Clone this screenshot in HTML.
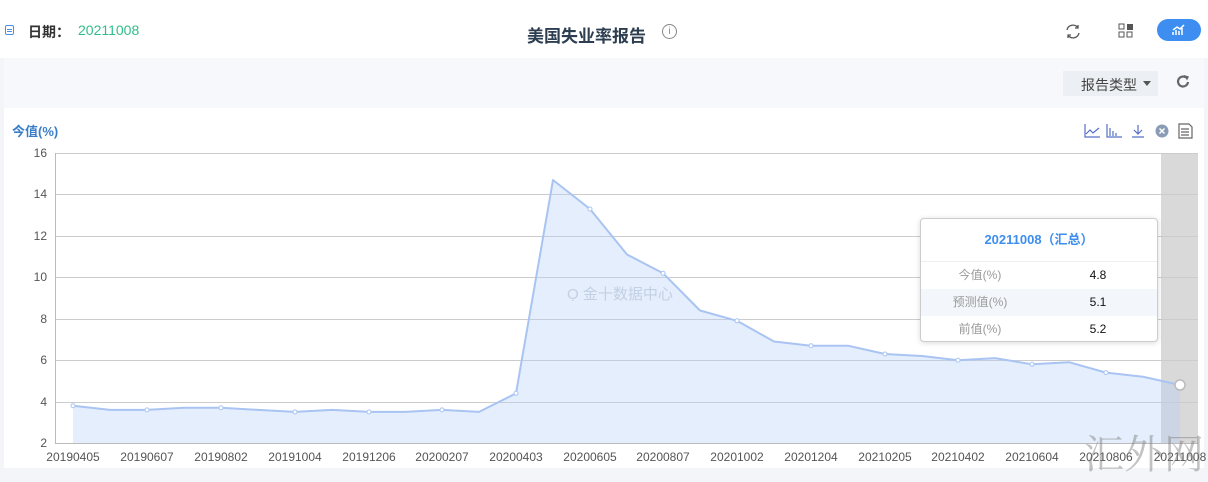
<!DOCTYPE html>
<html><head><meta charset="utf-8"><style>
body{margin:0;width:1208px;height:482px;overflow:hidden;background:#fff;font-family:"Liberation Sans","Noto Sans CJK SC",sans-serif;position:relative}
.a{position:absolute}
</style></head><body>
<!-- top bar -->
<div class="a" style="left:5px;top:25px;width:9px;height:10px;border:1.5px solid #4a90e2;border-radius:2px;box-sizing:border-box"></div>
<div class="a" style="left:7px;top:29px;width:5px;height:1px;background:#4a90e2"></div>
<div class="a" style="left:7px;top:31px;width:5px;height:1px;background:#4a90e2"></div>
<div class="a" style="left:28px;top:22px;font-size:14px;font-weight:bold;color:#333">日期：</div>
<div class="a" style="left:78px;top:22px;font-size:14px;color:#2fbf8a">20211008</div>
<div class="a" style="left:527px;top:22px;font-size:17px;font-weight:bold;color:#2c3e50">美国失业率报告</div>
<div class="a" style="left:662px;top:24px;width:15px;height:15px;border:1px solid #888;border-radius:50%;box-sizing:border-box;font-size:10px;color:#888;text-align:center;line-height:13px">i</div>
<svg class="a" style="left:1064px;top:23px" width="18" height="17" viewBox="0 0 18 17" fill="none" stroke="#555" stroke-width="1.3"><path d="M3 7a6 6 0 0 1 11-2M15 10a6 6 0 0 1-11 2"/><path d="M14 2v3h-3M4 15v-3h3"/></svg>
<svg class="a" style="left:1118px;top:23px" width="16" height="16"><rect x="1" y="1" width="5" height="5" fill="none" stroke="#555"/><rect x="9" y="1" width="6" height="6" fill="#555"/><rect x="1" y="9" width="5" height="5" fill="none" stroke="#555"/><rect x="9" y="9" width="5" height="5" fill="none" stroke="#555"/></svg>
<div class="a" style="left:1157px;top:19px;width:44px;height:22px;background:#3d8ef0;border-radius:11px"></div>
<svg class="a" style="left:1172px;top:24px" width="14" height="12"><path d="M1 11V8M4 11V6M7 11V7M10 11V4M1 6l4-3 3 2 4-4" stroke="#fff" stroke-width="1.5" fill="none"/></svg>
<!-- gray band -->
<div class="a" style="left:0;top:58px;width:1208px;height:424px;background:#f3f5f9"></div>
<div class="a" style="left:4px;top:58px;width:1200px;height:50px;background:#f7f8fb"></div>
<div class="a" style="left:1063px;top:71px;width:95px;height:25px;background:#eceff3"></div>
<div class="a" style="left:1081px;top:75px;font-size:14px;color:#444">报告类型</div>
<div class="a" style="left:1143px;top:81px;width:0;height:0;border-left:4px solid transparent;border-right:4px solid transparent;border-top:5px solid #555"></div>
<svg class="a" style="left:1176px;top:74px" width="15" height="15"><path d="M12 8a5 5 0 1 1-2-4.5" stroke="#666" stroke-width="2.2" fill="none"/><path d="M8 1l5 1.5-2 4z" fill="#666"/></svg>
<!-- chart area -->
<div class="a" style="left:4px;top:108px;width:1200px;height:360px;background:#fff"></div>
<div class="a" style="left:12px;top:121px;font-size:13px;font-weight:bold;color:#3a7ec8">今值(%)</div>
<svg class="a" style="left:1084px;top:123px" width="112" height="16" fill="none" stroke="#5470c6" stroke-width="1.2">
<path d="M1 1v13h15M2 11l4-4 3 3 6-5"/>
<path d="M23 1v13h15M26 13V5M29 13V8M32 13V10"/>
<path d="M54 2v9M50 7l4 4 4-4M48 14h12"/>
<circle cx="78" cy="8" r="6.5" fill="#8a9bb5" stroke="none"/><path d="M75.5 5.5l5 5M80.5 5.5l-5 5" stroke="#fff" stroke-width="1.5"/>
<path d="M95 1h10l3 3v11H95zM97 6h8M97 9h8M97 12h8" stroke="#666"/>
</svg>
<svg class="a" style="left:0;top:0" width="1208" height="482">
<rect x="1161" y="153" width="37" height="290" fill="#d9d9d9"/>
<g stroke="#ccc" stroke-width="1">
<line x1="55" x2="1198" y1="153.5" y2="153.5"/><line x1="55" x2="1198" y1="194.5" y2="194.5"/><line x1="55" x2="1198" y1="236.5" y2="236.5"/><line x1="55" x2="1198" y1="277.5" y2="277.5"/><line x1="55" x2="1198" y1="319.5" y2="319.5"/><line x1="55" x2="1198" y1="360.5" y2="360.5"/><line x1="55" x2="1198" y1="402.5" y2="402.5"/>
</g>
<line x1="55" x2="1198" y1="443.5" y2="443.5" stroke="#bbb"/>
<line x1="55.5" x2="55.5" y1="153" y2="443" stroke="#bbb"/>
<polygon fill="rgba(180,205,245,0.35)" points="73,443 73,405.7 110,409.9 147,409.9 184,407.8 221,407.8 258,409.9 295,411.9 332,409.9 369,411.9 405,411.9 442,409.9 479,411.9 516,393.3 553,180 590,209 627,254.5 663,273.2 700,310.5 737,320.8 774,341.5 811,345.7 848,345.7 885,354 922,356 958,360.2 995,358.1 1032,364.3 1069,362.2 1106,372.6 1143,376.7 1180,385 1180,443"/>
<polyline fill="none" stroke="#a9c4f2" stroke-width="2" stroke-linejoin="round" points="73,405.7 110,409.9 147,409.9 184,407.8 221,407.8 258,409.9 295,411.9 332,409.9 369,411.9 405,411.9 442,409.9 479,411.9 516,393.3 553,180 590,209 627,254.5 663,273.2 700,310.5 737,320.8 774,341.5 811,345.7 848,345.7 885,354 922,356 958,360.2 995,358.1 1032,364.3 1069,362.2 1106,372.6 1143,376.7 1180,385"/>
<g fill="#fff" stroke="#a9c4f2"><circle cx="73" cy="405.7" r="2"/><circle cx="147" cy="409.9" r="2"/><circle cx="221" cy="407.8" r="2"/><circle cx="295" cy="411.9" r="2"/><circle cx="369" cy="411.9" r="2"/><circle cx="442" cy="409.9" r="2"/><circle cx="516" cy="393.3" r="2"/><circle cx="590" cy="209" r="2"/><circle cx="663" cy="273.2" r="2"/><circle cx="737" cy="320.8" r="2"/><circle cx="811" cy="345.7" r="2"/><circle cx="885" cy="354" r="2"/><circle cx="958" cy="360.2" r="2"/><circle cx="1032" cy="364.3" r="2"/><circle cx="1106" cy="372.6" r="2"/><circle cx="1180" cy="385" r="5" stroke="#bbb" stroke-width="1.5"/></g>
<g font-size="12" fill="#555" text-anchor="end" font-family="Liberation Sans"><text x="47" y="157">16</text><text x="47" y="198">14</text><text x="47" y="240">12</text><text x="47" y="281">10</text><text x="47" y="323">8</text><text x="47" y="364">6</text><text x="47" y="406">4</text><text x="47" y="447">2</text></g>
<g font-size="12" fill="#555" text-anchor="middle" font-family="Liberation Sans"><text x="73" y="461">20190405</text><text x="147" y="461">20190607</text><text x="221" y="461">20190802</text><text x="295" y="461">20191004</text><text x="369" y="461">20191206</text><text x="442" y="461">20200207</text><text x="516" y="461">20200403</text><text x="590" y="461">20200605</text><text x="663" y="461">20200807</text><text x="737" y="461">20201002</text><text x="811" y="461">20201204</text><text x="885" y="461">20210205</text><text x="958" y="461">20210402</text><text x="1032" y="461">20210604</text><text x="1106" y="461">20210806</text><text x="1180" y="461">20211008</text></g>
<text x="567" y="299" font-size="15" fill="rgba(150,170,200,0.45)" font-family="Liberation Sans,Noto Sans CJK SC">Ọ 金十数据中心</text>
<text x="1084" y="468" font-size="40" fill="rgba(120,120,120,0.45)" font-family="Noto Serif CJK SC,serif">汇外网</text>
</svg>
<!-- tooltip -->
<div class="a" style="left:920px;top:218px;width:238px;height:124px;background:#fff;border:1px solid #ccc;border-radius:4px;box-shadow:0 1px 6px rgba(0,0,0,.15);box-sizing:border-box;font-size:12px">
<div style="height:42px;line-height:42px;text-align:center;color:#3d8ef0;font-weight:bold;font-size:13px;border-bottom:1px solid #eee">20211008（汇总）</div>
<div style="display:flex;height:27px;line-height:27px"><span style="width:118px;text-align:center;color:#999">今值(%)</span><span style="flex:1;text-align:center;color:#111">4.8</span></div>
<div style="display:flex;height:27px;line-height:27px;background:#f3f6fa"><span style="width:118px;text-align:center;color:#999">预测值(%)</span><span style="flex:1;text-align:center;color:#111">5.1</span></div>
<div style="display:flex;height:27px;line-height:27px"><span style="width:118px;text-align:center;color:#999">前值(%)</span><span style="flex:1;text-align:center;color:#111">5.2</span></div>
</div>
</body></html>
